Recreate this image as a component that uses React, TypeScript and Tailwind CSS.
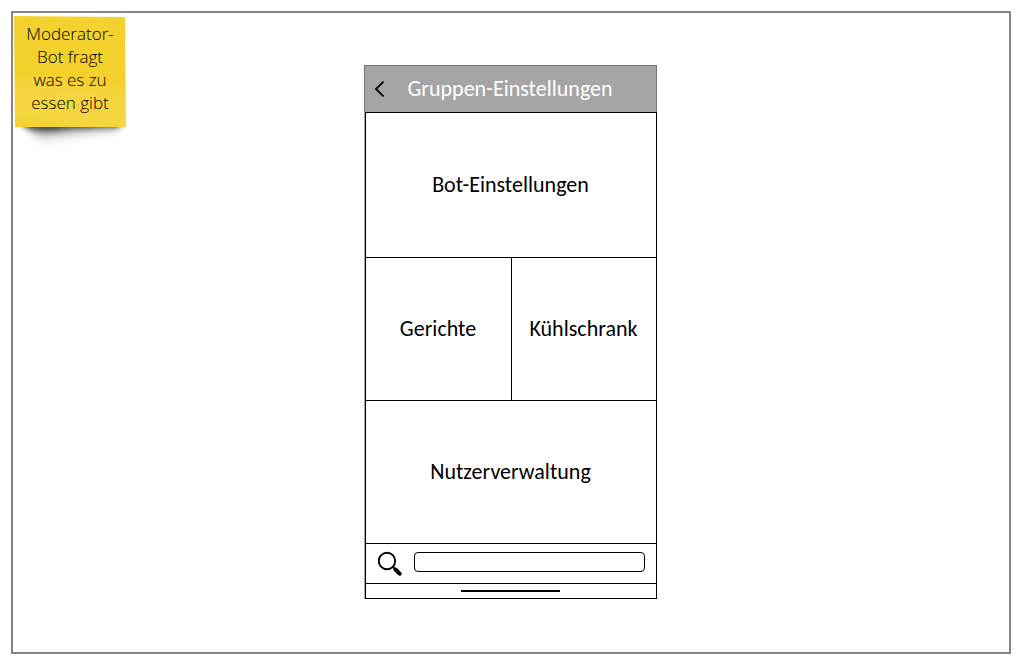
import React from "react";

function StickyNote() {
  return (
    <aside className="absolute left-0 top-0 h-36 w-32">
      <svg
        className="absolute left-0 top-0"
        width="132"
        height="146"
        viewBox="0 0 132 146"
        aria-hidden="true"
      >
        <defs>
          <linearGradient id="paper" x1="0.1" y1="0" x2="0" y2="1">
            <stop offset="0" stopColor="#f3d22f" />
            <stop offset="0.5" stopColor="#f3d02a" />
            <stop offset="0.65" stopColor="#f4d440" />
            <stop offset="0.88" stopColor="#f4d63f" />
            <stop offset="1" stopColor="#f2d02c" />
          </linearGradient>
          <filter id="soft" x="-20%" y="-100%" width="140%" height="300%">
            <feGaussianBlur stdDeviation="3" />
          </filter>
          <filter id="wide" x="-20%" y="-100%" width="140%" height="300%">
            <feGaussianBlur stdDeviation="5" />
          </filter>
          <clipPath id="below">
            <rect x="0" y="113" width="132" height="33" />
          </clipPath>
        </defs>
        <g clipPath="url(#below)">
          <path
            d="M14 108H108L104 118C70 120 50 126 24 126Z"
            fill="#000"
            fillOpacity="0.2"
            filter="url(#wide)"
          />
          <path
            d="M5 106H110L106 114C85 115 65 115 50 117C35 119 22 119 13 115Z"
            fill="#000"
            fillOpacity="0.7"
            filter="url(#soft)"
          />
        </g>
        <path d="M1 3L112 4L113 114H2Z" fill="url(#paper)" />
      </svg>
      <p className="relative w-[114px] pt-[9px] text-center font-['Open_Sans',sans-serif] text-[17px] font-light leading-[23px] text-black">
        Moderator-
        <br />
        Bot fragt
        <br />
        was es zu
        <br />
        essen gibt
      </p>
    </aside>
  );
}

function Tile({ label, className = "" }: { label: string; className?: string }) {
  return (
    <button
      type="button"
      className={`flex items-center justify-center border-b border-black bg-white pb-px ${className}`}
    >
      {label}
    </button>
  );
}

export default function App() {
  return (
    <div className="flex min-h-screen bg-white pb-[11px] pl-[11px] pr-[13px] pt-[11px] font-[Carlito,Calibri,Lato,sans-serif] text-black">
      <main className="relative flex flex-1 items-start justify-center border-2 border-[#858585] py-[52px] pr-0.5">
        <StickyNote />
        <section className="w-full max-w-[293px]">
          <header className="flex h-[47px] items-center border border-b-0 border-[#757575] bg-[#a5a5a5]">
            <button type="button" aria-label="Zurück" className="flex w-8 justify-center pr-px">
              <svg width="12" height="18" viewBox="0 0 12 18" aria-hidden="true">
                <path d="M9.5 1.7L2 9L9.5 16.3" fill="none" stroke="#000" strokeWidth="1.8" />
              </svg>
            </button>
            <h1 className="flex-1 pb-0.5 pr-8 text-center text-[22px] text-white">
              Gruppen-Einstellungen
            </h1>
          </header>
          <div className="border-l border-[#a8a8a8]">
            <div className="border border-black">
              <nav className="grid grid-cols-[146px_1fr] text-[22px]">
                <Tile label="Bot-Einstellungen" className="col-span-2 h-[145px]" />
                <Tile label="Gerichte" className="h-[143px] border-r" />
                <Tile label="Kühlschrank" className="h-[143px]" />
                <Tile label="Nutzerverwaltung" className="col-span-2 h-[143px]" />
              </nav>
              <form
                className="flex h-10 items-center border-b border-black pb-[3px] pl-3 pr-[11px]"
                onSubmit={(e) => e.preventDefault()}
              >
                <button type="submit" aria-label="Suchen" className="mr-3 mt-1">
                  <svg width="24" height="26" viewBox="0 0 24 26" aria-hidden="true">
                    <circle cx="9" cy="10" r="8.2" fill="none" stroke="#000" strokeWidth="1.9" />
                    <path d="M14.5 15.5L18 19" stroke="#000" strokeWidth="2" />
                    <path d="M17.5 18.5L21.6 22.7" stroke="#000" strokeWidth="4" strokeLinecap="round" />
                  </svg>
                </button>
                <input
                  type="text"
                  aria-label="Suche"
                  className="h-5 min-w-0 flex-1 rounded border border-black bg-white px-2 text-sm outline-none"
                />
              </form>
              <div className="flex h-3.5 items-center justify-center">
                <div className="h-0.5 w-[99px] bg-black" />
              </div>
            </div>
          </div>
        </section>
      </main>
    </div>
  );
}
